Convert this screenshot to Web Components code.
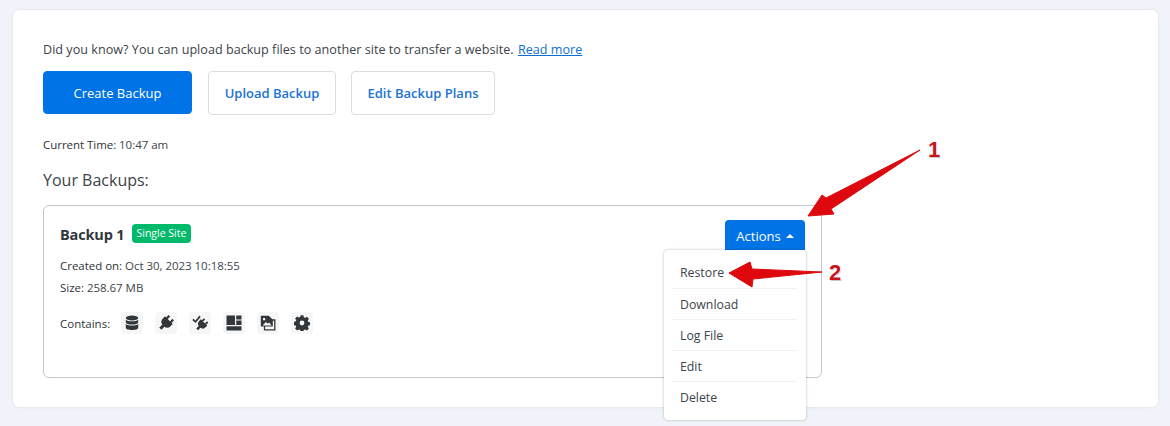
<!DOCTYPE html>
<html lang="en">
<head>
<meta charset="UTF-8" />
<title>Backups</title>
<style>
  html, body { margin: 0; height: 426px; overflow: hidden; background: #f0f4fa; }
  body { font-family: "Open Sans", "Noto Sans", sans-serif; color: #3c434a; }
</style>
</head>
<body>
<backup-page>
  <backup-card>
    <backup-stat label="Created on:">Oct 30, 2023 10:18:55</backup-stat>
    <backup-stat label="Size:">258.67 MB</backup-stat>
  </backup-card>
</backup-page>

<script>
  // 공통 버튼
  class UiButton extends HTMLElement {
    constructor() {
      super();
      this.attachShadow({ mode: "open" });
      this.shadowRoot.innerHTML = `
      <style>
        :host {
          display: flex;
          align-items: center;
          justify-content: center;
          box-sizing: border-box;
          height: 44px;
          border: 1px solid #d9dde1;
          border-radius: 4px;
          background: #fff;
          color: #1a73d4;
          font-size: 13px;
          font-weight: 600;
        }
        :host([primary]) {
          height: 43px;
          border-color: #0073e6;
          background: #0073e6;
          color: #fff;
          font-weight: 500;
        }
      </style>
      <slot></slot>`;
    }
  }
  customElements.define("ui-button", UiButton);

  // 메타 정보 한 줄
  class BackupStat extends HTMLElement {
    constructor() {
      super();
      this.attachShadow({ mode: "open" });
      this.shadowRoot.innerHTML = `
      <style>
        :host { display: block; height: 21.5px; line-height: 21px; font-size: 11.5px; letter-spacing: -0.03px; }
        b { font-weight: 500; color: #2c3338; }
      </style>
      <b></b> <slot></slot>`;
      this.shadowRoot.querySelector("b").textContent = this.getAttribute("label");
    }
  }
  customElements.define("backup-stat", BackupStat);

  // 포함 항목 아이콘
  const PLUG = `<path d="M4.200.5h2.200v4H4.200zM9.600.5h2.200v4H9.600z"/><path d="M2.500 4h11v3a5 5 0 0 1-4 4.800V16h-3v-4.200a5 5 0 0 1-4-4.800z"/>`;
  const ICONS = {
    database: `<ellipse cx="8" cy="3" rx="6.200" ry="2.500"/><path d="M1.800 4.700v2.500c0 1.300 2.800 2.400 6.200 2.400s6.200-1.100 6.200-2.400V4.700C13 5.700 10.700 6.300 8 6.300s-5-.6-6.200-1.600z"/><path d="M1.800 8.900v3.800C1.800 14 4.600 15 8 15s6.200-1 6.200-2.300V8.900c-1.200 1-3.500 1.600-6.200 1.600s-5-.6-6.200-1.600z"/>`,
    plug: `<g transform="rotate(45 8 8)">${PLUG}</g>`,
    plugcheck: `<g transform="translate(3.200 3.200) scale(.82) rotate(45 8 8)">${PLUG}</g><path d="M.3 5l1.300-1.300 1.900 1.900L7.400.6l1.300 1.300-5.200 6z"/>`,
    layout: `<path d="M.5.500h8.500v9.500H.5zM10.200.500h5.300v4h-5.300zM10.200 5.500h5.300V10h-5.300zM.5 11.200h15v4.300H.5z"/>`,
    media: `<path fill="none" stroke="#32373c" stroke-width="1.300" d="M4.500 5h10.300v9.800H4.500z"/><path d="M.8.800h8l4 4v6.700H.8z"/><path fill="#f6f6f6" d="M3 3h2.200v2.200H3zM3 10l3-3 1.800 1.800L9 7.600l2.500 2.600v.3H3z"/>`,
    gear: `<path fill-rule="evenodd" d="M6.600.5h2.800l.4 2 1.300.6 1.800-1.100 2 2-1.100 1.800.6 1.300 2 .4v2.800l-2 .4-.6 1.300 1.100 1.800-2 2-1.800-1.100-1.300.6-.4 2H6.600l-.4-2-1.300-.6-1.800 1.100-2-2 1.100-1.800-.6-1.300-2-.4V7.100l2-.4.6-1.300L1.100 3.600l2-2 1.800 1.100 1.300-.6zM8 5.800a2.400 2.400 0 1 0 0 4.800 2.400 2.400 0 0 0 0-4.800z" transform="translate(0 -.2)"/>`
  };

  class BackupIcon extends HTMLElement {
    constructor() {
      super();
      this.attachShadow({ mode: "open" });
      this.shadowRoot.innerHTML = `
      <style>
        :host {
          display: flex;
          align-items: center;
          justify-content: center;
          width: 22px;
          height: 22px;
          border-radius: 4px;
          background: #f6f6f6;
        }
        svg { width: 16px; height: 16px; fill: #32373c; }
      </style>
      <svg viewBox="0 0 16 16">${ICONS[this.getAttribute("name")]}</svg>`;
    }
  }
  customElements.define("backup-icon", BackupIcon);

  // 드롭다운 메뉴
  class ActionMenu extends HTMLElement {
    constructor() {
      super();
      this.attachShadow({ mode: "open" });
      const items = ["Restore", "Download", "Log File", "Edit", "Delete"];
      this.shadowRoot.innerHTML = `
      <style>
        :host {
          position: absolute;
          top: 44px;
          left: 620px;
          box-sizing: border-box;
          width: 142px;
          height: 170px;
          padding: 8px 9px 0 8px;
          border-radius: 4px;
          background: #fff;
          box-shadow: 0 0 3px rgba(0, 0, 0, 0.28);
          font-size: 12.300px;
        }
        div {
          box-sizing: border-box;
          height: 31px;
          line-height: 30px;
          padding-left: 8px;
          border-bottom: 1px solid #f0f1f2;
        }
        div + div { line-height: 32px; }
        div:last-child { border-bottom: 0; }
      </style>
      ${items.map((t) => `<div>${t}</div>`).join("")}`;
    }
  }
  customElements.define("action-menu", ActionMenu);

  // 백업 카드
  class BackupCard extends HTMLElement {
    constructor() {
      super();
      this.attachShadow({ mode: "open" });
      const icons = ["database", "plug", "plugcheck", "layout", "media", "gear"];
      this.shadowRoot.innerHTML = `
      <style>
        :host {
          display: block;
          position: relative;
          box-sizing: border-box;
          height: 173px;
          padding: 14px 16px 0;
          border: 1px solid #c4c7ca;
          border-radius: 6px;
        }
        .head { display: flex; align-items: center; height: 28px; }
        h3 { margin: 0; font-size: 14.500px; font-weight: 700; color: #32373c; letter-spacing: -0.15px; }
        .tag {
          margin-left: 7px;
          padding: 0 5px;
          height: 19px;
          line-height: 18px;
          border-radius: 4px;
          background: #00b96b;
          color: #fff;
          font-size: 10.500px;
          font-weight: 500;
          position: relative;
          top: -1px;
        }
        .meta { margin-top: 7px; }
        .contains { display: flex; align-items: center; margin-top: 14px; font-size: 11.500px; font-weight: 500; color: #2c3338; }
        .contains span { width: 78px; margin-right: -17px; }
        .icons { display: flex; gap: 12px; }
        .actions {
          position: absolute;
          top: 14px;
          left: 681px;
          box-sizing: border-box;
          width: 80px;
          height: 30px;
          padding-top: 1px;
          display: flex;
          align-items: center;
          justify-content: center;
          gap: 5px;
          border-radius: 4px 4px 0 0;
          background: #0073e6;
          color: #fff;
          font-size: 13px;
        }
        .actions i { border: 4px solid transparent; border-bottom-color: #fff; border-top: 0; }
      </style>
      <div class="head"><h3>Backup 1</h3><span class="tag">Single Site</span></div>
      <div class="meta"><slot></slot></div>
      <div class="contains"><span>Contains:</span><div class="icons">${icons
        .map((n) => `<backup-icon name="${n}"></backup-icon>`)
        .join("")}</div></div>
      <div class="actions">Actions <i></i></div>
      <action-menu></action-menu>`;
    }
  }
  customElements.define("backup-card", BackupCard);

  // 스크린샷 위 주석 화살표
  class ArrowNotes extends HTMLElement {
    constructor() {
      super();
      this.attachShadow({ mode: "open" });
      this.shadowRoot.innerHTML = `
      <style>
        :host { position: absolute; inset: 0; display: block; pointer-events: none; }
        svg { position: absolute; inset: 0; overflow: visible; }
        path { fill: #dd090e; stroke: #dd090e; stroke-width: 1; stroke-linejoin: round; }
        span {
          position: absolute;
          font: 700 22px/1 "Liberation Sans", sans-serif;
          color: #c8141c;
          text-shadow: 1px 0 0 #fff, -1px 0 0 #fff, 0 -1px 0 #fff, 1px 1px 0 rgba(0,0,0,.22);
        }
      </style>
      <svg width="1170" height="426">
        <path d="M920 150 L826 198 L822 195 L808 216 L834 214 L831 209 Z"/>
        <path d="M822 272 L752 269 L750 262 L729 273 L752 287 L753 279 Z"/>
      </svg>
      <span style="left:928px;top:139px">1</span>
      <span style="left:829px;top:262px">2</span>`;
    }
  }
  customElements.define("arrow-notes", ArrowNotes);

  // 페이지 전체
  class BackupPage extends HTMLElement {
    constructor() {
      super();
      this.attachShadow({ mode: "open" });
      this.shadowRoot.innerHTML = `
      <style>
        :host {
          display: block;
          box-sizing: border-box;
          position: relative;
          height: 426px;
          padding: 10px 12px 19px 13px;
        }
        .panel {
          box-sizing: border-box;
          height: 397px;
          padding: 30px 336px 0 30px;
          border-radius: 6px;
          background: #fff;
          box-shadow: 0 0 3px rgba(0, 0, 0, 0.1);
        }
        .tip { height: 20px; line-height: 20px; font-size: 12.600px; letter-spacing: 0.02px; white-space: nowrap; }
        .tip a { margin-left: 1px; color: #0f6fd1; text-decoration: underline; }
        .buttons { display: flex; gap: 15px; margin-top: 11px; }
        ui-button:nth-child(1) { width: 149px; margin-right: 1px; }
        ui-button:nth-child(2) { width: 128px; }
        ui-button:nth-child(3) { width: 144px; }
        .time { margin-top: 21px; height: 18px; line-height: 18px; font-size: 11.500px; letter-spacing: -0.04px; }
        .time b { font-weight: 500; color: #2c3338; }
        h2 { margin: 14px 0 0; height: 24px; line-height: 24px; font-size: 16px; font-weight: 500; }
        .slot-wrap { margin-top: 13px; }
      </style>
      <div class="panel">
        <div class="tip">Did you know? You can upload backup files to another site to transfer a website. <a>Read more</a></div>
        <div class="buttons">
          <ui-button primary>Create Backup</ui-button>
          <ui-button>Upload Backup</ui-button>
          <ui-button>Edit Backup Plans</ui-button>
        </div>
        <div class="time"><b>Current Time:</b> 10:47 am</div>
        <h2>Your Backups:</h2>
        <div class="slot-wrap"><slot></slot></div>
      </div>
      <arrow-notes></arrow-notes>`;
    }
  }
  customElements.define("backup-page", BackupPage);
</script>
</body>
</html>
